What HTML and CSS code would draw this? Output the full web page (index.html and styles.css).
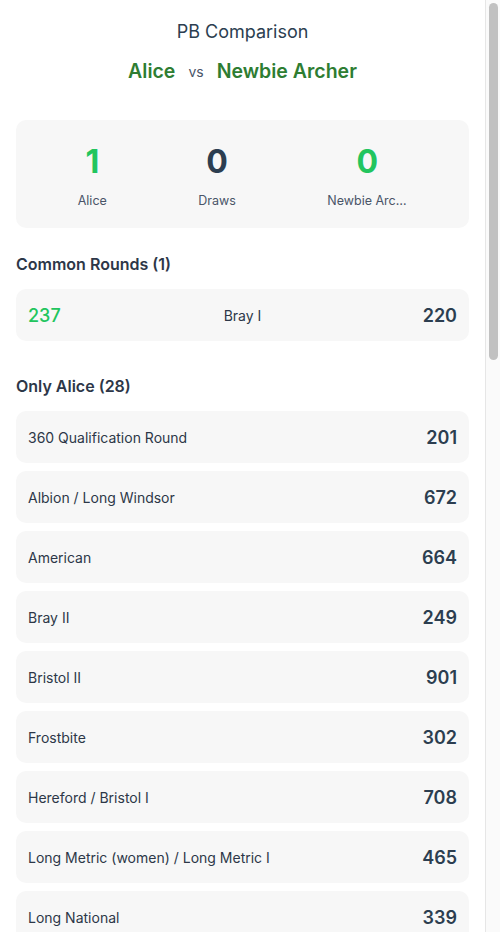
FILE: index.html
```html
<!DOCTYPE html>
<html lang="en">
<head>
<meta charset="utf-8">
<title>PB Comparison</title>
<link rel="stylesheet" href="styles.css">
</head>
<body>
<div class="viewport">
<main class="page">
  <header class="header">
    <h1 class="title">PB Comparison</h1>
    <div class="matchup">
      <span class="archer">Alice</span>
      <span class="vs">vs</span>
      <span class="archer">Newbie Archer</span>
    </div>
  </header>

  <section class="summary">
    <div class="stat">
      <div class="stat-num win">1</div>
      <div class="stat-label">Alice</div>
    </div>
    <div class="stat">
      <div class="stat-num">0</div>
      <div class="stat-label">Draws</div>
    </div>
    <div class="stat">
      <div class="stat-num win">0</div>
      <div class="stat-label trunc">Newbie Archer</div>
    </div>
  </section>

  <section class="group first">
    <h2 class="group-title">Common Rounds (1)</h2>
    <ul class="rows">
      <li class="row common">
        <span class="score-a">237</span>
        <span class="round-mid">Bray I</span>
        <span class="score">220</span>
      </li>
    </ul>
  </section>

  <section class="group">
    <h2 class="group-title">Only Alice (28)</h2>
    <ul class="rows">
      <li class="row"><span class="round">360 Qualification Round</span><span class="score">201</span></li>
      <li class="row"><span class="round">Albion / Long Windsor</span><span class="score">672</span></li>
      <li class="row"><span class="round">American</span><span class="score">664</span></li>
      <li class="row"><span class="round">Bray II</span><span class="score">249</span></li>
      <li class="row"><span class="round">Bristol II</span><span class="score">901</span></li>
      <li class="row"><span class="round">Frostbite</span><span class="score">302</span></li>
      <li class="row"><span class="round">Hereford / Bristol I</span><span class="score">708</span></li>
      <li class="row"><span class="round">Long Metric (women) / Long Metric I</span><span class="score">465</span></li>
      <li class="row"><span class="round">Long National</span><span class="score">339</span></li>
      <li class="row"><span class="round">Long Western</span><span class="score">512</span></li>
      <li class="row"><span class="round">National</span><span class="score">421</span></li>
      <li class="row"><span class="round">New National</span><span class="score">398</span></li>
      <li class="row"><span class="round">New Western</span><span class="score">587</span></li>
      <li class="row"><span class="round">Portsmouth</span><span class="score">512</span></li>
      <li class="row"><span class="round">Short Metric I</span><span class="score">548</span></li>
      <li class="row"><span class="round">Short National</span><span class="score">376</span></li>
      <li class="row"><span class="round">Short Western</span><span class="score">603</span></li>
      <li class="row"><span class="round">St. George</span><span class="score">602</span></li>
      <li class="row"><span class="round">St. Nicholas</span><span class="score">588</span></li>
      <li class="row"><span class="round">Warwick</span><span class="score">356</span></li>
      <li class="row"><span class="round">Western</span><span class="score">634</span></li>
      <li class="row"><span class="round">Windsor</span><span class="score">712</span></li>
      <li class="row"><span class="round">WA 18m</span><span class="score">498</span></li>
      <li class="row"><span class="round">WA 25m</span><span class="score">512</span></li>
      <li class="row"><span class="round">WA 50m</span><span class="score">541</span></li>
      <li class="row"><span class="round">WA 70m</span><span class="score">503</span></li>
      <li class="row"><span class="round">Worcester</span><span class="score">231</span></li>
      <li class="row"><span class="round">York</span><span class="score">802</span></li>
    </ul>
  </section>
</main>
</div>
<div class="scrollbar" aria-hidden="true">
  <div class="thumb"></div>
</div>
</body>
</html>
```

FILE: styles.css
```css
* {
  box-sizing: border-box;
}

html, body {
  margin: 0;
  padding: 0;
  background: #ffffff;
  height: 100%;
  overflow: hidden;
}

body {
  font-family: Inter, "Noto Sans", "Liberation Sans", sans-serif;
  color: #2d3748;
  display: flex;
  height: 100vh;
}

.viewport {
  flex: 1;
  min-width: 0;
  height: 100vh;
  overflow: hidden;
}

.scrollbar {
  flex: 0 0 15px;
  height: 100vh;
  background: #fafafa;
  border-left: 1px solid #e6e6e6;
  padding: 3px 2px 0 3px;
}

.thumb {
  height: 357px;
  background: #c1c1c1;
  border-radius: 5px;
}

.page {
  padding: 18px 16px 16px;
}

.header {
  display: flex;
  flex-direction: column;
  align-items: center;
  gap: 13px;
}

.title {
  margin: 0;
  font-size: 18px;
  line-height: 27px;
  font-weight: 400;
  color: #2c3e50;
}

.matchup {
  display: flex;
  align-items: center;
  gap: 13px;
  line-height: 27px;
}

.archer {
  font-size: 19.5px;
  font-weight: 600;
  color: #2e7d32;
}

.vs {
  font-size: 14px;
  color: #4a5568;
}

.summary {
  margin-top: 35px;
  background: #f7f7f7;
  border-radius: 10px;
  padding: 18px 16px 17px;
  display: flex;
  justify-content: space-around;
}

.stat {
  display: flex;
  flex-direction: column;
  align-items: center;
}

.stat-num {
  font-size: 32px;
  line-height: 48px;
  font-weight: 700;
  color: #2c3e50;
}

.stat-num.win {
  color: #22c55e;
}

.stat-label {
  margin-top: 5px;
  font-size: 12.5px;
  line-height: 20px;
  color: #4a5568;
}

.stat-label.trunc {
  max-width: 80px;
  white-space: nowrap;
  overflow: hidden;
  text-overflow: ellipsis;
}

.group {
  margin-top: 33px;
}

.group.first {
  margin-top: 24px;
}

.group-title {
  margin: 0 0 13px;
  font-size: 16px;
  line-height: 24px;
  font-weight: 600;
  color: #2d3748;
}

.rows {
  list-style: none;
  margin: 0;
  padding: 0;
  display: flex;
  flex-direction: column;
  gap: 8px;
}

.row {
  height: 52px;
  padding: 0 12px;
  background: #f7f7f7;
  border-radius: 10px;
  display: flex;
  align-items: center;
  justify-content: space-between;
}

.round {
  font-size: 14px;
  color: #2d3748;
}

.score {
  font-size: 18px;
  font-weight: 600;
  color: #2c3e50;
}

.row.common {
  display: grid;
  grid-template-columns: 1fr auto 1fr;
}

.score-a {
  font-size: 18px;
  font-weight: 500;
  color: #22c55e;
}

.round-mid {
  font-size: 14px;
  color: #2d3748;
  text-align: center;
}

.row.common .score {
  justify-self: end;
}
```
